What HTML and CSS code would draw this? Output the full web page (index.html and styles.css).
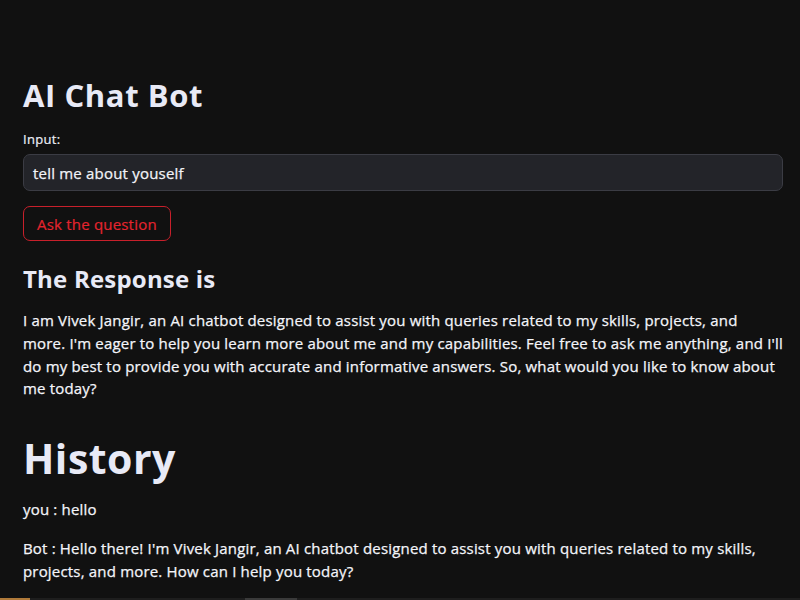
FILE: index.html
```html
<!DOCTYPE html>
<html>
<head>
<meta charset="utf-8">
<link rel="stylesheet" href="styles.css">
</head>
<body>
<main class="app">
  <h1 class="title">AI Chat Bot</h1>
  <div class="field">
    <label class="label">Input:</label>
    <div class="input">tell me about youself</div>
  </div>
  <button class="btn">Ask the question</button>
  <h3 class="subtitle">The Response is</h3>
  <p class="text">I am Vivek Jangir, an AI chatbot designed to assist you with queries related to my skills, projects, and<br>more. I'm eager to help you learn more about me and my capabilities. Feel free to ask me anything, and I'll<br>do my best to provide you with accurate and informative answers. So, what would you like to know about<br>me today?</p>
  <h1 class="big">History</h1>
  <p class="text line">you : hello</p>
  <p class="text">Bot : Hello there! I'm Vivek Jangir, an AI chatbot designed to assist you with queries related to my skills, projects, and more. How can I help you today?</p>
</main>
<div class="taskbar"><span class="tb-a"></span><span class="tb-b"></span></div>
</body>
</html>
```
FILE: styles.css
```css
html, body {
  margin: 0;
  padding: 0;
  background: #111111;
  height: 600px;
  overflow: hidden;
}
body {
  font-family: "Open Sans", "Noto Sans", sans-serif;
  color: #f4f5fa;
  position: relative;
}
.app {
  width: 760px;
  padding: 72px 17px 0 23px;
  display: flex;
  flex-direction: column;
}
.title {
  margin: 0;
  font-size: 31px;
  font-weight: 700;
  letter-spacing: 0.6px;
  line-height: 46px;
  color: #e8eaf6;
}
.field {
  margin-top: 12px;
  display: flex;
  flex-direction: column;
}
.label {
  font-size: 13px;
  letter-spacing: 0.3px;
  line-height: 18px;
  color: #eceef6;
  -webkit-text-stroke: 0.2px #eceef6;
}
.input {
  margin-top: 6px;
  box-sizing: border-box;
  height: 37px;
  border: 1px solid #3b3c44;
  border-radius: 7px;
  background: #232429;
  padding: 0 9px;
  display: flex;
  align-items: center;
  font-size: 15px;
  letter-spacing: 0.2px;
  color: #f2f3f8;
  -webkit-text-stroke: 0.25px #f2f3f8;
}
.btn {
  margin-top: 15px;
  align-self: flex-start;
  height: 35px;
  padding: 0 13px;
  background: transparent;
  border: 1px solid #c8202b;
  border-radius: 7px;
  color: #e4242e;
  font-family: inherit;
  font-size: 15px;
  letter-spacing: 0.2px;
  -webkit-text-stroke: 0.2px #e4242e;
}
.subtitle {
  margin: 22px 0 0;
  font-size: 24px;
  font-weight: 700;
  letter-spacing: 0.2px;
  line-height: 32px;
  color: #e8eaf6;
}
.text {
  margin: 0 -6px 0 0;
  font-size: 15px;
  letter-spacing: 0.18px;
  line-height: 22.8px;
  -webkit-text-stroke: 0.25px #f4f5fa;
}
.subtitle + .text { margin-top: 14px; }
.big {
  margin: 30px 0 0;
  font-size: 41px;
  font-weight: 700;
  letter-spacing: 0.5px;
  line-height: 56px;
  color: #e8eaf6;
}
.line { margin-top: 12px; margin-bottom: 16px; }
.taskbar {
  position: absolute;
  left: 0; right: 0; bottom: 0;
  height: 2px;
  background: #1e1e1e;
}
.tb-a { position: absolute; left: 0; width: 30px; height: 2px; background: #b07a3a; }
.tb-b { position: absolute; left: 245px; width: 52px; height: 2px; background: #3a3a3a; }
```
